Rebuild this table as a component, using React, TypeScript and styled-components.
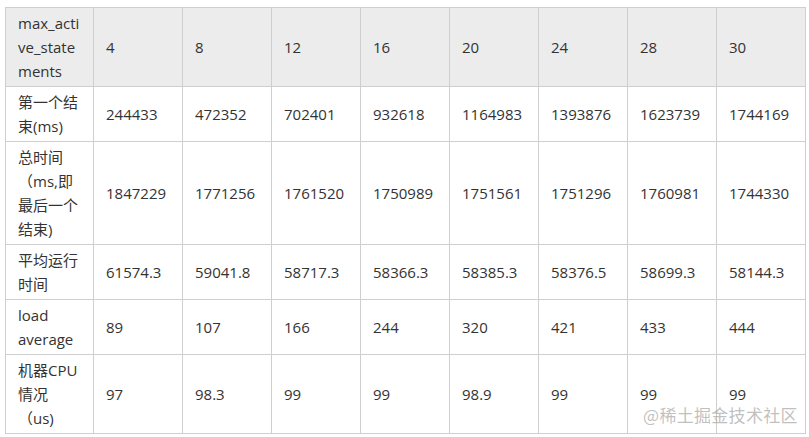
import React, { FC } from "react";
import styled, { createGlobalStyle } from "styled-components";

const GlobalStyle = createGlobalStyle`
  html, body {
    margin: 0;
    padding: 0;
    background: #ffffff;
  }
`;

interface RowData {
  label: string;
  values: string[];
}

const header: RowData = {
  label: "max_active_statements",
  values: ["4", "8", "12", "16", "20", "24", "28", "30"],
};

const rows: RowData[] = [
  {
    label: "第一个结束(ms)",
    values: ["244433", "472352", "702401", "932618", "1164983", "1393876", "1623739", "1744169"],
  },
  {
    label: "总时间（ms,即最后一个结束)",
    values: ["1847229", "1771256", "1761520", "1750989", "1751561", "1751296", "1760981", "1744330"],
  },
  {
    label: "平均运行时间",
    values: ["61574.3", "59041.8", "58717.3", "58366.3", "58385.3", "58376.5", "58699.3", "58144.3"],
  },
  {
    label: "load average",
    values: ["89", "107", "166", "244", "320", "421", "433", "444"],
  },
  {
    label: "机器CPU情况（us)",
    values: ["97", "98.3", "99", "99", "98.9", "99", "99", "99"],
  },
];

const Page = styled.div`
  position: relative;
  width: 809px;
  height: 437px;
  box-sizing: border-box;
  padding: 7px 0 0 5px;
  font-family: "Open Sans", "Noto Sans CJK SC", sans-serif;
  color: #333333;
`;

const Table = styled.table`
  border-collapse: collapse;
  table-layout: fixed;
  width: 801px;
  font-size: 15px;
  line-height: 24px;
`;

const Cell = styled.td<{ $head?: boolean }>`
  border: 1px solid #cfcfcf;
  padding: 3px 12px;
  vertical-align: middle;
  text-align: left;
  word-break: normal;
  overflow-wrap: anywhere;
  background: ${(p) => (p.$head ? "#ececec" : "#ffffff")};
  font-weight: normal;
`;

// site watermark laid over the bottom-right corner of the table
const Watermark = styled.div`
  position: absolute;
  left: 643px;
  top: 406px;
  font-family: "Noto Sans CJK SC", sans-serif;
  font-size: 17px;
  line-height: 17px;
  color: rgba(150, 150, 150, 0.6);
  letter-spacing: 0.3px;
  pointer-events: none;
`;

const Row: FC<{ data: RowData; head?: boolean }> = ({ data, head }) => (
  <tr>
    <Cell $head={head}>{data.label}</Cell>
    {data.values.map((v, i) => (
      <Cell key={i} $head={head}>
        {v}
      </Cell>
    ))}
  </tr>
);

const App: FC = () => (
  <Page>
    <GlobalStyle />
    <Table>
      <colgroup>
        {Array.from({ length: 9 }).map((_, i) => (
          <col key={i} style={{ width: i === 0 ? 88 : 89 }} />
        ))}
      </colgroup>
      <tbody>
        <Row data={header} head />
        {rows.map((r) => (
          <Row key={r.label} data={r} />
        ))}
      </tbody>
    </Table>
    <Watermark>@稀土掘金技术社区</Watermark>
  </Page>
);

export default App;
